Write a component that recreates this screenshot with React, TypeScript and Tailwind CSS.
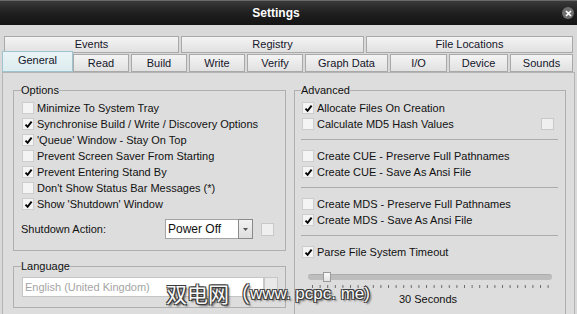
import React from "react";

const Check = ({ on }: { on?: boolean }) => (
  <span className="w-[12px] h-[12px] ml-px border border-[#cdcdcd] bg-[#f4f4f4] flex items-center justify-center shrink-0">
    {on && (
      <svg width="9" height="9" viewBox="0 0 9 9">
        <path d="M1.5 4.6 L3.6 6.8 L7.6 1.6" fill="none" stroke="#000" strokeWidth="1.9" />
      </svg>
    )}
  </span>
);

const Row = ({ on, label }: { on?: boolean; label: string }) => (
  <div className="h-[16px] flex items-center gap-[3px]">
    <Check on={on} />
    <span className="whitespace-nowrap">{label}</span>
  </div>
);

const Sep = () => <div className="mt-[7px] mb-[8px] h-px bg-[#ababab] mr-[7px]" />;

const topTabs = [
  { label: "Events", w: "w-[175px]" },
  { label: "Registry", w: "w-[183px]" },
  { label: "File Locations", w: "w-[207px]" },
];

const tabs = [
  { label: "Read", w: "w-[56px]" },
  { label: "Build", w: "w-[56px]" },
  { label: "Write", w: "w-[56px]" },
  { label: "Verify", w: "w-[56px]" },
  { label: "Graph Data", w: "w-[83px]" },
  { label: "I/O", w: "w-[57px]" },
  { label: "Device", w: "w-[59px]" },
  { label: "Sounds", w: "w-[63px]" },
];

const tabCls =
  "h-full flex items-center justify-center border border-[#a9a9a9] bg-gradient-to-b from-[#f4f4f4] to-[#e1e1e1] text-[#15152a]";

export default function App() {
  return (
    <div className="relative w-[577px] h-[314px] overflow-hidden bg-[#d9d9d9] text-[11px] text-[#111] font-['Liberation_Sans',Arial,sans-serif]">
      {/* Title bar */}
      <div className="h-[25px] border-t border-[#6a6a6a] bg-gradient-to-b from-[#3a3a3a] via-[#1f1f1f] to-[#141414] flex items-center">
        <div className="flex-1 flex justify-center pr-[10px] text-white font-bold text-[12px]">Settings</div>
        <div className="w-[12px] h-[12px] rounded-full bg-[#6e6e6e] flex items-center justify-center mr-[3px]">
          <svg width="7" height="7" viewBox="0 0 7 7">
            <path d="M1 1 L6 6 M6 1 L1 6" stroke="#fff" strokeWidth="1.7" />
          </svg>
        </div>
      </div>

      {/* Tabs */}
      <div className="pt-[11px]">
        <div className="h-[17px] flex gap-[2px] pl-[4px]">
          {topTabs.map((t) => (
            <div key={t.label} className={`${tabCls} ${t.w}`}>
              {t.label}
            </div>
          ))}
        </div>
        <div className="h-[18px] mt-px flex items-end pl-[2px]">
          <div className="relative z-10 w-[71px] h-[21px] flex items-center justify-center border border-[#9fc3cf] bg-gradient-to-b from-[#eaf4f6] to-[#dcecef] text-[#15152a] pb-[2px]">
            General
          </div>
          <div className="flex gap-[2px] h-full">
            {tabs.map((t) => (
              <div key={t.label} className={`${tabCls} ${t.w}`}>
                {t.label}
              </div>
            ))}
          </div>
        </div>
      </div>

      {/* Panel */}
      <div className="ml-[2px] mr-[2px] h-[260px] border border-[#b4b4b4] bg-[#dddddd] flex gap-[8px] pl-[10px] pt-[10px]">
        {/* Left column */}
        <div className="w-[273px] flex flex-col">
          <fieldset className="border border-[#b0b0b0] pl-[7px] pt-[3px] pb-[11px]">
            <legend className="px-0 leading-[14px]">Options</legend>
            <Row label="Minimize To System Tray" />
            <Row on label="Synchronise Build / Write / Discovery Options" />
            <Row on label="'Queue' Window - Stay On Top" />
            <Row label="Prevent Screen Saver From Starting" />
            <Row on label="Prevent Entering Stand By" />
            <Row label="Don't Show Status Bar Messages (*)" />
            <Row on label="Show 'Shutdown' Window" />
            <div className="mt-[7px] h-[20px] flex items-center">
              <span className="w-[144px]">Shutdown Action:</span>
              <div className="h-[20px] w-[73px] bg-white border border-[#a3a3a3] border-r-0 flex items-center pl-[2px] text-[12px]">
                Power Off
              </div>
              <div className="h-[20px] w-[15px] border border-[#8a8a8a] bg-gradient-to-b from-[#f2f2f2] to-[#dedede] flex items-center justify-center">
                <svg width="5" height="3" viewBox="0 0 5 3">
                  <path d="M0 0 H5 L2.5 3 Z" fill="#555" />
                </svg>
              </div>
              <span className="ml-[8px] w-[13px] h-[13px] border border-[#c8c8c8] bg-[#efefef]" />
            </div>
          </fieldset>

          <fieldset className="mt-[8px] border border-[#b0b0b0] pl-[7px] pr-[7px] pt-[4px] pb-[10px]">
            <legend className="px-0 leading-[14px]">Language</legend>
            <div className="h-[20px] flex ml-px">
              <div className="flex-1 bg-white border border-[#c6c6c6] flex items-center pl-[2px] text-[#a4a4a4]">
                English (United Kingdom)
              </div>
              <div className="w-[14px] border border-[#c6c6c6] bg-[#e9e9e9]" />
            </div>
          </fieldset>
        </div>

        {/* Right column */}
        <div className="w-[272px]">
          <fieldset className="border border-[#b0b0b0] pl-[6px] pt-[3px] pb-[10px]">
            <legend className="px-0 leading-[14px]">Advanced</legend>
            <Row on label="Allocate Files On Creation" />
            <div className="h-[16px] flex items-center gap-[3px]">
              <Check />
              <span className="flex-1">Calculate MD5 Hash Values</span>
              <span className="w-[13px] h-[12px] mr-[11px] border border-[#c8c8c8] bg-[#efefef]" />
            </div>
            <Sep />
            <Row label="Create CUE - Preserve Full Pathnames" />
            <Row on label="Create CUE - Save As Ansi File" />
            <Sep />
            <Row label="Create MDS - Preserve Full Pathnames" />
            <Row on label="Create MDS - Save As Ansi File" />
            <Sep />
            <Row on label="Parse File System Timeout" />
            <div className="ml-[7px] mr-[13px] mt-[12px]">
              <div className="relative h-[10px] flex items-center">
                <div className="w-full h-[6px] rounded-[3px] bg-[#bdbdbd] border-t border-[#adadad]" />
                <div className="absolute left-[15px] top-0 w-[8px] h-[10px] bg-gradient-to-b from-[#fafafa] to-[#e3e3e3] border border-[#9a9a9a]" />
              </div>
              <svg className="mt-[3px] block" width="243" height="4" viewBox="0 0 243 4">
                {Array.from({ length: 32 }, (_, i) => (
                  <line key={i} x1={4.5 + i * 7.6} y1="0" x2={4.5 + i * 7.6} y2="3" stroke="#6d6d6d" strokeWidth="1" />
                ))}
              </svg>
              <div className="mt-[3px] text-center pr-[4px] leading-[14px]">30 Seconds</div>
            </div>
          </fieldset>
        </div>
      </div>

      {/* Watermark */}
      <div className="absolute left-[166px] top-[278px] flex items-center text-[#f7f7f7] whitespace-nowrap [text-shadow:1px_1px_0_#3a3a3a,-1px_-1px_0_#3a3a3a,1px_-1px_0_#3a3a3a,-1px_1px_0_#3a3a3a,2px_2px_2px_#555]">
        <span className="text-[21px] font-['Noto_Sans_CJK_SC',sans-serif]">双电网（</span>
        <span className="text-[17px] font-['Liberation_Sans',Arial,sans-serif]">www. pcpc. me)</span>
      </div>
    </div>
  );
}
